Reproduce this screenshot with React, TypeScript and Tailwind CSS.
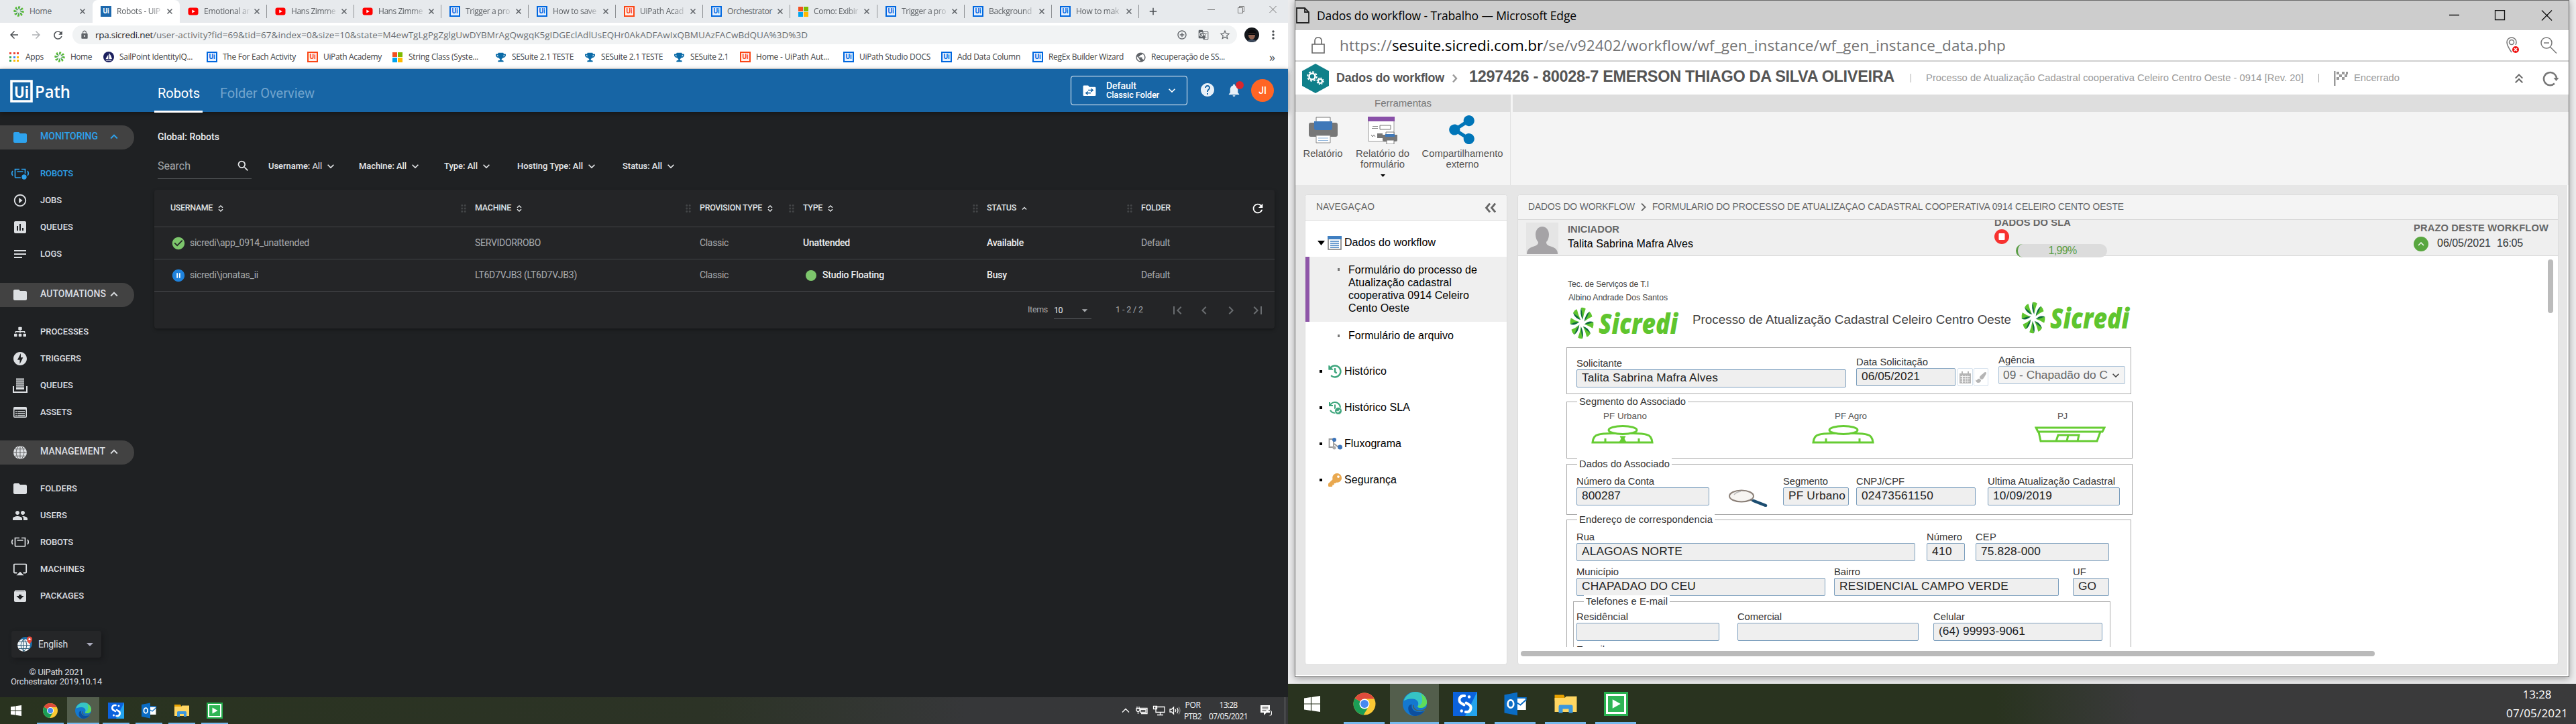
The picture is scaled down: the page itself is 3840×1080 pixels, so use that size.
import { useLayoutEffect, useRef, useState } from "react";
import type { ReactNode } from "react";
import {
  MdFolder, MdPlayCircleOutline, MdInsertChart, MdNotes, MdOfflineBolt, MdPeople, MdAirplay,
  MdArchive, MdSearch, MdRefresh, MdKeyboardArrowUp, MdKeyboardArrowDown, MdFirstPage, MdLastPage,
  MdChevronLeft, MdChevronRight, MdHelp, MdNotifications, MdArrowDropDown, MdCheckCircle, MdPauseCircleFilled,
  MdStarBorder, MdGTranslate, MdMoreVert, MdLock, MdArrowBack, MdArrowForward, MdAddCircleOutline, MdPublic,
  MdDragIndicator, MdAdd, MdKeyboardDoubleArrowUp,
} from "react-icons/md";
import { FaSitemap, FaTrophy, FaShareAlt, FaKey, FaHistory, FaPaintBrush } from "react-icons/fa";

/** Single line of text whose letter spacing is adjusted so that it fills `w` pixels. */
function Fit({ w, className = "", children }: { w: number; className?: string; children: ReactNode }) {
  const ref = useRef<HTMLSpanElement>(null);
  const [ls, setLs] = useState(0);
  useLayoutEffect(() => {
    const el = ref.current;
    if (!el) return;
    const n = (el.textContent || "").length || 1;
    setLs((w - el.getBoundingClientRect().width) / n);
  }, [w]);
  return (
    <span className={`block shrink-0 whitespace-pre ${className}`} style={{ width: w, letterSpacing: ls }}>
      <span ref={ref}>{children}</span>
    </span>
  );
}

/* ---------- small logos ---------- */

function Pinwheel({ className }: { className: string }) {
  const blades = [0, 1, 2, 3, 4, 5, 6, 7];
  return (
    <svg viewBox="0 0 100 100" preserveAspectRatio="none" className={className}>
      {blades.map((i) => (
        <g key={i} transform={`rotate(${i * 45} 50 50)`}>
          <path d="M47 2 Q58 0 66 5 Q58 20 54 38 Z" fill="#5fc52e" />
          <path d="M47 2 Q40 20 54 40 Q54 22 47 2 Z" fill="#0b6b3a" />
        </g>
      ))}
    </svg>
  );
}

function UiBox({ c }: { c: "blue" | "orange" | "solid" }) {
  const tone =
    c === "blue"
      ? "border-2 border-[#0067df] bg-[#e3f0ff] text-[#0067df]"
      : c === "orange"
        ? "border-2 border-[#fa4616] bg-[#fff1ec] text-[#fa4616]"
        : "bg-[#1c68ad] text-white";
  return (
    <span className={`flex h-4 w-4 shrink-0 items-center justify-center font-[Roboto] text-[10px] leading-none font-bold ${tone}`}>
      Ui
    </span>
  );
}

function Microsoft() {
  return (
    <span className="grid h-[15px] w-[15px] shrink-0 grid-cols-2 gap-px">
      <span className="bg-[#f25022]" />
      <span className="bg-[#7fba00]" />
      <span className="bg-[#00a4ef]" />
      <span className="bg-[#ffb900]" />
    </span>
  );
}

function Youtube() {
  return (
    <svg viewBox="0 0 16 16" className="h-4 w-4 shrink-0">
      <rect x="0.5" y="2.5" width="15" height="11" rx="3" fill="#f00" />
      <path d="M6.3 5.4v5.2L10.8 8z" fill="#fff" />
    </svg>
  );
}

function AppsGrid() {
  const c = ["bg-[#ea4335]", "bg-[#ea4335]", "bg-[#ea4335]", "bg-[#34a853]", "bg-[#4285f4]", "bg-[#fbbc05]", "bg-[#34a853]", "bg-[#fbbc05]", "bg-[#fbbc05]"];
  return (
    <span className="grid h-[14px] w-[14px] shrink-0 grid-cols-3 gap-[2.5px]">
      {c.map((k, i) => (
        <span key={i} className={k} />
      ))}
    </span>
  );
}

function SailPoint() {
  return (
    <svg viewBox="0 0 16 16" className="h-4 w-4 shrink-0">
      <circle cx="8" cy="8" r="8" fill="#1b1f5e" />
      <path d="M8.6 2v9H13Q12 6 8.6 2zM7.4 4.500v6.500H3.500Q5 8 7.400 4.500zM3 12.200h10l-1.500 1.200h-7z" fill="#fff" />
    </svg>
  );
}

function Tab({ icon, title, w, active, sep }: { icon: ReactNode; title: string; w: number; active?: boolean; sep?: boolean }) {
  return (
    <div className={`flex h-[34px] w-[130px] shrink-0 items-center pl-3 ${active ? "rounded-t-lg bg-white" : ""}`}>
      {icon}
      <span className={`ml-2 w-[72px] text-[12px] text-[#5b5f63] ${w > 50 && w !== 67 ? "[mask-image:linear-gradient(to_right,black_70%,transparent_98%)]" : ""}`}>
        <Fit w={w}>{title}</Fit>
      </span>
      <svg viewBox="0 0 8 8" className="ml-[3px] h-2 w-2 shrink-0">
        <path d="M0.500 0.500l7 7M7.500 0.500l-7 7" stroke="#5f6368" strokeWidth="1.500" />
      </svg>
      <span className={`ml-auto h-5 w-px ${sep ? "bg-[#8e9194]" : ""}`} />
    </div>
  );
}

const bookmarks: { icon: ReactNode; slot: number; w: number; t: string }[] = [
  { icon: <AppsGrid />, slot: 67, w: 27, t: "Apps" },
  { icon: <Pinwheel className="h-4 w-4" />, slot: 73, w: 32, t: "Home" },
  { icon: <SailPoint />, slot: 154, w: 109, t: "SailPoint IdentityIQ..." },
  { icon: <UiBox c="blue" />, slot: 150, w: 109, t: "The For Each Activity" },
  { icon: <UiBox c="orange" />, slot: 127, w: 87, t: "UiPath Academy" },
  { icon: <Microsoft />, slot: 154, w: 104, t: "String Class (Syste..." },
  { icon: <FaTrophy className="text-[15px] text-[#0b6ba8]" />, slot: 133, w: 92, t: "SESuite 2.1 TESTE" },
  { icon: <FaTrophy className="text-[15px] text-[#0b6ba8]" />, slot: 133, w: 92, t: "SESuite 2.1 TESTE" },
  { icon: <FaTrophy className="text-[15px] text-[#0b6ba8]" />, slot: 98, w: 57, t: "SESuite 2.1" },
  { icon: <UiBox c="orange" />, slot: 154, w: 109, t: "Home - UiPath Aut..." },
  { icon: <UiBox c="blue" />, slot: 146, w: 106, t: "UiPath Studio DOCS" },
  { icon: <UiBox c="blue" />, slot: 136, w: 94, t: "Add Data Column" },
  { icon: <UiBox c="blue" />, slot: 153, w: 112, t: "RegEx Builder Wizard" },
  { icon: <MdPublic className="text-[17px] text-[#5f6368]" />, slot: 200, w: 110, t: "Recuperação de SS..." },
];

function ChromeChrome() {
  return (
    <div className="h-[103px] border-b border-[#d5d7da] bg-white font-['Open_Sans',sans-serif]">
      <div className="flex h-[34px] items-center bg-[#e7eaed] pl-2">
        <Tab icon={<Pinwheel className="h-4 w-4 shrink-0" />} title="Home" w={33} />
        <Tab icon={<UiBox c="solid" />} title="Robots - UiP" w={65} active />
        <Tab icon={<Youtube />} title="Emotional ar" w={68} sep />
        <Tab icon={<Youtube />} title="Hans Zimme" w={66} sep />
        <Tab icon={<Youtube />} title="Hans Zimme" w={66} sep />
        <Tab icon={<UiBox c="blue" />} title="Trigger a pro" w={66} sep />
        <Tab icon={<UiBox c="blue" />} title="How to save" w={65} sep />
        <Tab icon={<UiBox c="orange" />} title="UiPath Acad" w={65} sep />
        <Tab icon={<UiBox c="blue" />} title="Orchestrator" w={67} sep />
        <Tab icon={<Microsoft />} title="Como: Exibir" w={66} sep />
        <Tab icon={<UiBox c="blue" />} title="Trigger a pro" w={66} sep />
        <Tab icon={<UiBox c="blue" />} title="Background" w={64} sep />
        <Tab icon={<UiBox c="blue" />} title="How to mak" w={64} sep />
        <MdAdd className="ml-3 text-[18px] text-[#4b4f53]" />
        <svg viewBox="0 0 104 12" className="mb-[6px] ml-[72px] h-3 w-[104px]" fill="none" stroke="#777">
          <path d="M0 6.500h11M45.500 3.500h7v8h-7zM47.500 3.500v-2h7v8h-2M92.500 1l10 10M102.500 1l-10 10" />
        </svg>
      </div>
      <div className="flex h-9 items-center">
        <MdArrowBack className="ml-3 text-[18px] text-[#4b4f53]" />
        <MdArrowForward className="ml-[15px] text-[18px] text-[#b0b2b5]" />
        <MdRefresh className="ml-[14px] text-[19px] text-[#4b4f53]" />
        <div className="ml-[12px] flex h-7 w-[1736px] items-center rounded-full bg-[#f1f3f4] text-[13.500px]">
          <MdLock className="ml-[11px] text-[14px] text-[#5f6368]" />
          <Fit w={86} className="ml-[9px] text-[#202124]">rpa.sicredi.net</Fit>
          <Fit w={976} className="text-[#6a6e72]">
            /user-activity?fid=69&tid=67&index=0&size=10&state=M4ewTgLgPgZglgUwDYBMrAgQwgqK5gIDGEclAdlUsEQHr0AkADFAwIxQBMUAzFACwBdQUA%3D%3D
          </Fit>
          <MdAddCircleOutline className="ml-auto text-[16px] text-[#5f6368]" />
          <MdGTranslate className="ml-4 text-[16px] text-[#5f6368]" />
          <MdStarBorder className="mr-[9px] ml-[15px] text-[18px] text-[#5f6368]" />
        </div>
        <svg viewBox="0 0 22 22" className="ml-[11px] h-[22px] w-[22px]">
          <circle cx="11" cy="11" r="11" fill="#14171b" />
          <ellipse cx="11" cy="11" rx="5" ry="7" fill="#8f6250" />
          <path d="M5 6q6-5 12 0v2H5zM6 8.500h10v2.500H6z" fill="#0a0a0c" />
          <path d="M4 20q7-5 14 0l-7 2z" fill="#3b4a5f" />
        </svg>
        <MdMoreVert className="ml-[11px] text-[20px] text-[#4b4f53]" />
      </div>
      <div className="flex h-[30px] items-center pl-[14px] text-[12px] text-[#3c4043]">
        {bookmarks.map((b, i) => (
          <div key={i} className="flex h-full shrink-0 items-center" style={{ width: b.slot }}>
            <span className="flex w-6 shrink-0 items-center">{b.icon}</span>
            <Fit w={b.w}>{b.t}</Fit>
          </div>
        ))}
        <span className="text-[18px] leading-none text-[#4b4f53]">»</span>
      </div>
    </div>
  );
}

/* ---------- orchestrator ---------- */

function RobotIcon({ globe }: { globe?: boolean }) {
  return (
    <svg viewBox="0 0 28 20" className="h-5 w-7" fill="none" stroke="currentColor" strokeWidth="1.700">
      <path d="M10 3.500H6.500v11.500a1 1 0 0 0 1 1h13a1 1 0 0 0 1-1V3.500H16M10 3.500h3M9.500 7h9M3 6q-2.500 3.500 0 7M25 6q2.500 3.500 0 7" />
      {globe && <circle cx="20" cy="15" r="4.500" fill="currentColor" stroke="#1f2123" />}
    </svg>
  );
}

function GlobeIcon() {
  return (
    <svg viewBox="0 0 20 20" className="ml-[2px] h-5 w-5">
      <circle cx="10" cy="10" r="10" fill="#dcdfe2" />
      <path d="M0 10h20M2 4.800h16M2 15.200h16M10 0v20M8 0q-8 10 0 20M12 0q8 10 0 20" fill="none" stroke="#424242" strokeWidth="0.700" />
    </svg>
  );
}

function TrayIcon() {
  return (
    <svg viewBox="0 0 22 22" className="h-[22px] w-[22px]" stroke="currentColor" fill="none">
      <path d="M5 1.500h12M5 4.500h12M5 7.500h12M5 10.500h12M5 13.500h12M5 16h12" strokeWidth="2" />
      <path d="M1 12v9h20v-9" strokeWidth="2" />
    </svg>
  );
}

function AssetIcon() {
  return (
    <svg viewBox="0 0 20 16" className="h-4 w-5" fill="none" stroke="currentColor">
      <rect x="0.750" y="0.750" width="18.500" height="14.500" rx="1" strokeWidth="1.500" />
      <path d="M1 2.500h18" strokeWidth="3" />
      <path d="M3 7h2M3 10h2M3 13h2M6 7h11M6 10h11M6 13h11" strokeWidth="1.600" />
    </svg>
  );
}

function Section({ icon, label, w, blue, top }: { icon: ReactNode; label: string; w: number; blue?: boolean; top: string }) {
  return (
    <div className={`flex h-9 w-[200px] items-center rounded-r-full bg-[#424242] text-[14px] font-medium ${blue ? "text-[#2ea3ee]" : "text-[#dcdfe2]"} ${top}`}>
      <span className="flex w-[60px] items-center pl-[18px] text-[24px]">{icon}</span>
      <Fit w={w} className="-mt-[3px]">{label}</Fit>
      <MdKeyboardArrowUp className="mr-[19px] -mt-[2px] ml-auto text-[22px]" />
    </div>
  );
}

function Item({ icon, label, w, blue }: { icon: ReactNode; label: string; w: number; blue?: boolean }) {
  return (
    <div className={`flex h-10 items-center text-[13px] font-medium ${blue ? "text-[#2ea3ee]" : "text-[#dcdfe2]"}`}>
      <span className="flex w-[60px] items-center justify-center text-[22px]">{icon}</span>
      <Fit w={w}>{label}</Fit>
    </div>
  );
}

function Sidebar() {
  return (
    <div className="flex h-[873px] w-[230px] shrink-0 flex-col">
      <Section top="mt-5" icon={<MdFolder />} label="MONITORING" w={86} blue />
      <div className="mt-4">
        <Item icon={<RobotIcon globe />} label="ROBOTS" w={49} blue />
        <Item icon={<MdPlayCircleOutline />} label="JOBS" w={32} />
        <Item icon={<MdInsertChart className="text-[24px]" />} label="QUEUES" w={49} />
        <Item icon={<MdNotes className="text-[24px]" />} label="LOGS" w={32} />
      </div>
      <Section top="mt-[23px]" icon={<MdFolder />} label="AUTOMATIONS" w={98} />
      <div className="mt-[17px]">
        <Item icon={<FaSitemap className="text-[18px]" />} label="PROCESSES" w={72} />
        <Item icon={<MdOfflineBolt className="text-[24px]" />} label="TRIGGERS" w={61} />
        <Item icon={<TrayIcon />} label="QUEUES" w={49} />
        <Item icon={<AssetIcon />} label="ASSETS" w={47} />
      </div>
      <Section top="mt-[22px]" icon={<GlobeIcon />} label="MANAGEMENT" w={97} />
      <div className="mt-4">
        <Item icon={<MdFolder className="text-[24px]" />} label="FOLDERS" w={55} />
        <Item icon={<MdPeople className="text-[24px]" />} label="USERS" w={40} />
        <Item icon={<RobotIcon />} label="ROBOTS" w={49} />
        <Item icon={<MdAirplay />} label="MACHINES" w={66} />
        <Item icon={<MdArchive className="text-[24px]" />} label="PACKAGES" w={65} />
      </div>
      <div className="mt-[32px] ml-[17px] flex h-10 w-[134px] items-center rounded bg-[#252628] text-[14px] text-[#dcdfe2] shadow-[3px_3px_6px_#18191b]">
        <svg viewBox="0 0 24 24" className="ml-2 h-6 w-6">
          <circle cx="13" cy="11" r="10" fill="#1b6ea8" />
          <circle cx="10.500" cy="13.500" r="9.500" fill="#eef3f6" />
          <path d="M1 13.500h19M3 8.500h15M3 18.500h15M10.500 4v19M10.500 4q-9 9.500 0 19M10.500 4q9 9.500 0 19" stroke="#20506e" fill="none" strokeWidth="0.900" />
          <path d="M19 12q-4-5-4-7.500a4 4 0 0 1 8 0Q23 7 19 12z" fill="#e94b3c" />
          <circle cx="19" cy="4.500" r="1.600" fill="#fff" />
        </svg>
        <Fit w={44} className="ml-2">English</Fit>
        <MdArrowDropDown className="ml-auto mr-[5px] text-[24px] text-[#aab]" />
      </div>
      <div className="mt-[15px] ml-4 flex w-[136px] flex-col items-center text-[13px] leading-[14px] text-[#dcdfe2]">
        <Fit w={81}>© UiPath 2021</Fit>
        <Fit w={136}>Orchestrator 2019.10.14</Fit>
      </div>
    </div>
  );
}

function Filter({ k, w, slot, first }: { k: string; w: number; slot: number; first?: boolean }) {
  return (
    <div className={`flex shrink-0 items-center ${first ? "ml-[25px]" : ""}`} style={{ width: slot }}>
      <Fit w={w}>
        {k} <span className={first ? "font-normal" : ""}>All</span>
      </Fit>
      <MdKeyboardArrowDown className="ml-[3px] text-[20px]" />
    </div>
  );
}

function Th({ t, w, sort, last, first }: { t: string; w: number; sort?: "both" | "up"; last?: boolean; first?: boolean }) {
  return (
    <div className={`flex items-center ${first ? "pl-6" : ""}`}>
      <Fit w={w}>{t}</Fit>
      {sort && (
        <svg viewBox="0 0 8 10" className="ml-2 h-[10px] w-2" fill="none" stroke="currentColor" strokeWidth="1.500">
          <path d={sort === "both" ? "M1 3.800L4 1l3 2.800M1 6.200L4 9l3-2.800" : "M1 6.500l3-3 3 3"} />
        </svg>
      )}
      {last ? (
        <MdRefresh className="mr-[14px] ml-auto text-[22px] text-white" />
      ) : (
        <MdDragIndicator className="mr-[8px] ml-auto text-[18px] text-[#434547]" />
      )}
    </div>
  );
}

const cols = "grid grid-cols-[478px_335px_154px_274px_230px_199px] border-b border-[#434548]";

function Orchestrator() {
  return (
    <div className="h-[937px] bg-[#1f2123] font-[Roboto,sans-serif]">
      <div className="relative flex h-16 items-start bg-[#1765a5] shadow-[0_2px_8px_rgba(0,0,0,0.4)]">
        <svg viewBox="0 0 96 34" className="mt-4 ml-[15px] h-[34px] w-[96px]">
          <path d="M2 2h30v30H2z" fill="none" stroke="#fff" strokeWidth="3.600" />
          <text x="6" y="26.500" fontFamily="Open Sans" fontWeight="700" fontSize="24" fill="#fff" textLength="22" lengthAdjust="spacingAndGlyphs">Ui</text>
          <text x="37" y="26.500" fontFamily="Open Sans" fontWeight="600" fontSize="25" fill="#fff" textLength="53" lengthAdjust="spacingAndGlyphs">Path</text>
        </svg>
        <div className="mt-[23px] ml-[119px] flex h-[42px] w-[72px] flex-col border-b-[3px] border-white pl-[5px]">
          <Fit w={63} className="text-[20px] leading-[26px] text-white">Robots</Fit>
        </div>
        <Fit w={141} className="mt-[23px] ml-[26px] text-[20px] leading-[26px] text-[#71a4cd]">Folder Overview</Fit>
        <div className="mt-[10px] ml-auto flex h-11 w-[174px] items-center rounded border border-white text-white">
          <svg viewBox="0 0 20 18" className="ml-[17px] h-[17px] w-5">
            <path d="M0 2a1.500 1.500 0 0 1 1.500-1.500H8l2 2.500h8.500A1.500 1.500 0 0 1 20 4.500v11a1.500 1.500 0 0 1-1.500 1.500h-17A1.500 1.500 0 0 1 0 15.500z" fill="#fff" />
            <path d="M8 8h7M12.500 5.500L15.500 8l-3 2.500M12 12.500H5M7.500 10L4.500 12.500l3 2.500" stroke="#1765a5" strokeWidth="1.500" fill="none" />
          </svg>
          <div className="ml-[15px] flex flex-col text-[13px] leading-[14px] font-medium">
            <Fit w={45} className="text-[14px]">Default</Fit>
            <Fit w={79}>Classic Folder</Fit>
          </div>
          <MdKeyboardArrowDown className="ml-[9px] text-[20px]" />
        </div>
        <MdHelp className="mt-[19px] ml-[18px] text-[24px] text-[#e8f0f7]" />
        <span className="relative mt-[20px] ml-[16px] text-[23px] text-[#e8f0f7]">
          <MdNotifications />
          <span className="absolute -top-[2px] right-[-3px] h-3 w-3 rounded-full bg-[#d9272e]" />
        </span>
        <span className="mt-[15px] mr-[21px] ml-[14px] flex h-[34px] w-[34px] items-center justify-center rounded-full bg-[#ff6524] text-[14px] font-medium text-white">JI</span>
      </div>
      <div className="flex">
        <Sidebar />
        <div className="w-[1670px]">
          <Fit w={92} className="mt-[28px] ml-[5px] text-[14px] leading-[18px] font-medium text-[#eceef0]">Global: Robots</Fit>
          <div className="mt-[16px] flex h-[38px] items-center pl-[5px] text-[13px] font-medium text-[#e6e8ea]">
            <div className="flex h-full w-[140px] items-center border-b border-[#505356] pr-[2px] text-[16px] font-normal text-[#a5a8ab]">
              <Fit w={49}>Search</Fit>
              <MdSearch className="ml-auto text-[21px] text-[#dfe1e3]" />
            </div>
            <Filter k="Username:" w={80} slot={135} first />
            <Filter k="Machine:" w={71} slot={127} />
            <Filter k="Type:" w={50} slot={109} />
            <Filter k="Hosting Type:" w={98} slot={157} />
            <Filter k="Status:" w={59} slot={90} />
          </div>
          <div className="mt-[16px] flex h-[207px] flex-col rounded bg-[#242527] text-[14px] text-[#a9acb0] shadow-[0_2px_5px_rgba(0,0,0,0.35)]">
            <div className={`${cols} h-14 text-[12.500px] font-medium text-[#dfe1e3]`}>
              <Th t="USERNAME" w={63} sort="both" first />
              <Th t="MACHINE" w={54} sort="both" />
              <Th t="PROVISION TYPE" w={93} sort="both" />
              <Th t="TYPE" w={29} sort="both" />
              <Th t="STATUS" w={44} sort="up" />
              <Th t="FOLDER" w={44} last />
            </div>
            <div className={`${cols} h-12 items-center`}>
              <div className="flex items-center pl-[25px]">
                <MdCheckCircle className="text-[22px] text-[#7dc66c]" />
                <Fit w={178} className="ml-[6px]">sicredi\app_0914_unattended</Fit>
              </div>
              <Fit w={98}>SERVIDORROBO</Fit>
              <Fit w={43}>Classic</Fit>
              <Fit w={70} className="font-medium text-[#eceef0]">Unattended</Fit>
              <Fit w={55} className="font-medium text-[#eceef0]">Available</Fit>
              <Fit w={43}>Default</Fit>
            </div>
            <div className={`${cols} h-12 items-center`}>
              <div className="flex items-center pl-[25px]">
                <span className="flex w-[22px] justify-center">
                  <span className="flex h-[14px] w-[14px] rounded-full bg-white text-[#1f82dc]">
                    <MdPauseCircleFilled className="-m-1 h-[22px] w-[22px] shrink-0" />
                  </span>
                </span>
                <Fit w={102} className="ml-[6px]">sicredi\jonatas_ii</Fit>
              </div>
              <Fit w={152}>LT6D7VJB3 (LT6D7VJB3)</Fit>
              <Fit w={43}>Classic</Fit>
              <div className="flex items-center font-medium text-[#eceef0]">
                <span className="mr-[9px] ml-[4px] h-4 w-4 rounded-full bg-[#7dc66c]" />
                <Fit w={92}>Studio Floating</Fit>
              </div>
              <Fit w={30} className="font-medium text-[#eceef0]">Busy</Fit>
              <Fit w={43}>Default</Fit>
            </div>
            <div className="flex flex-1 items-center justify-end text-[12.500px]">
              <Fit w={30}>Items</Fit>
              <div className="mt-[2px] ml-[9px] flex h-6 w-[56px] items-center border-b border-[#55585b] text-[#e6e8ea]">
                <Fit w={13}>10</Fit>
                <MdArrowDropDown className="ml-auto text-[20px] text-[#aaadb0]" />
              </div>
              <Fit w={41} className="ml-[36px]">1 - 2 / 2</Fit>
              <div className="mr-[13px] ml-[39px] flex gap-4 text-[24px] text-[#6a6d70]">
                <MdFirstPage />
                <MdChevronLeft />
                <MdChevronRight />
                <MdLastPage />
              </div>
            </div>
          </div>
        </div>
      </div>
    </div>
  );
}

/* ---------- taskbar ---------- */

function WinLogo({ className }: { className: string }) {
  return (
    <svg viewBox="0 0 16 16" className={className} fill="#fff">
      <path d="M0 2.300L6.600 1.400v6.200H0zM7.400 1.300L16 0v7.600H7.400zM0 8.400h6.600v6.200L0 13.700zM7.400 8.400H16V16l-8.600-1.300z" />
    </svg>
  );
}

const ChromeIcon = () => (
  <svg viewBox="0 0 48 48" className="h-full w-full">
    <circle cx="24" cy="24" r="22" fill="#fbc934" />
    <path d="M24 24L5 13A22 22 0 0 0 22 46l8-13z" fill="#1b9d56" />
    <path d="M24 24L5 13A22 22 0 0 1 43.500 14H24z" fill="#de4b3c" />
    <circle cx="24" cy="24" r="10" fill="#fff" />
    <circle cx="24" cy="24" r="8" fill="#4688f0" />
  </svg>
);

const EdgeIcon = () => (
  <svg viewBox="0 0 48 48" className="h-full w-full">
    <circle cx="24" cy="24" r="24" fill="#1478cf" />
    <path d="M2 18C6 6 16 0 25 0c14 0 23 10 23 20 0 7-5 12-12 12-5 0-7-2-6-4 4-9-4-15-12-14C10 14 5 16 2 18z" fill="#36c4c5" />
    <path d="M36 4c8 4 12 11 12 17 0 7-6 11-12 11-5 0-7-2-6-4 8 0 12-12 6-24z" fill="#5fdc5a" />
    <path d="M18 25c-2 11 8 19 25 13-5 7-12 10-19 10-8 0-13-8-13-15 0-5 3-8 7-8z" fill="#0d4f9e" />
    <path d="M22 26c-1 8 8 14 20 9l5-4-1 5c-15 6-27 0-26-9z" fill="#535e4c" />
  </svg>
);

const SIcon = () => (
  <svg viewBox="0 0 24 24" className="h-full w-full">
    <path d="M0 0h24v24H0z" fill="#0b62dd" />
    <path d="M24 0v24H12z" fill="#23a3ee" />
    <path d="M11.500 4H9.500a4 4 0 0 0-1 7.500l2.500 1.500M12.500 20h2a4 4 0 0 0 1-7.500L13 11" fill="none" stroke="#fff" strokeWidth="2.600" strokeLinecap="round" />
    <circle cx="16" cy="5" r="1.500" fill="#fff" />
    <circle cx="8.500" cy="19" r="1.500" fill="#fff" />
  </svg>
);

const OutlookIcon = () => (
  <svg viewBox="0 0 24 24" className="h-full w-full">
    <path d="M12 6h10.500v12H12z" fill="#fff" />
    <path d="M12 6h10.500v2L17 13l-5-3" fill="none" stroke="#0a6cc4" strokeWidth="1.300" />
    <path d="M1 3l13-2.500v23L1 21z" fill="#0a6cc4" />
    <ellipse cx="7.300" cy="12" rx="2.900" ry="3.800" fill="none" stroke="#fff" strokeWidth="1.800" />
  </svg>
);

const ExplorerIcon = () => (
  <svg viewBox="0 0 24 24" className="h-full w-full">
    <path d="M1 3h9l1 2v4H1z" fill="#e5a000" />
    <path d="M1 6h10l1.500-1.500H23V20H1z" fill="#ffd662" />
    <path d="M5 20v-5.500q0-1.500 1.500-1.500h11q1.500 0 1.500 1.500V21h-4v-4H9v4H5z" fill="#3b97dd" />
  </svg>
);

const PlayIcon = () => (
  <svg viewBox="0 0 24 24" className="h-full w-full">
    <path d="M0 0h24v24H0z" fill="#28b14f" />
    <path d="M3 3h18v18H3z" fill="#2fb555" stroke="#fff" strokeWidth="2" />
    <path d="M8.500 7.500v9l8-4.500z" fill="#fff" />
  </svg>
);

const apps = [ChromeIcon, EdgeIcon, SIcon, OutlookIcon, ExplorerIcon, PlayIcon];

function TaskbarSmall() {
  return (
    <div className="flex h-10 items-stretch bg-linear-to-r from-[#29331f] via-[#2c3326] via-55% to-[#363739] to-75% font-['Open_Sans',sans-serif] text-white">
      <span className="flex w-12 items-center justify-center"><WinLogo className="h-4 w-4" /></span>
      {apps.map((Icon, i) => (
        <span key={i} className={`flex flex-col items-center justify-between pt-2 ${i === 0 ? "ml-[7px] w-10" : i === 1 ? "ml-[5px] w-12 bg-[#535e4c]" : i === 2 ? "ml-[5px] w-10" : "ml-[9px] w-10"}`}>
          <span className="h-6 w-6"><Icon /></span>
          <span className="h-[2px] w-full bg-[#76b9ed]" />
        </span>
      ))}
      <div className="ml-auto flex items-center text-[12px] leading-[17px]">
        <svg viewBox="0 0 90 16" className="h-4 w-[90px]" fill="none" stroke="#fff" strokeWidth="1.300">
          <path d="M2 10.500L7 5.500l5 5" />
          <path d="M27 4.500h12v8H30M29 6.500h8v4h-8zM24 2v3M27 2v3M23 5h5v3q-2.500 3-5 0zM25.500 9v4" />
          <path d="M52 2.500h13v8H52zM48.500 1.500h5v4h-5zM58.500 11v3M54 14.500h9" />
          <path d="M73 6h2.500l3-3v10l-3-3H73zM81 6q1.500 2 0 4M83.500 4q3 4 0 8" />
          <path d="M86 2.500q4 5.500 0 11" stroke="#888" />
        </svg>
        <div className="ml-[4px] flex w-[26px] flex-col items-center">
          <Fit w={23}>POR</Fit>
          <Fit w={26}>PTB2</Fit>
        </div>
        <div className="ml-[11px] flex flex-col items-center">
          <Fit w={27}>13:28</Fit>
          <Fit w={58}>07/05/2021</Fit>
        </div>
        <svg viewBox="0 0 18 18" className="mr-[19px] ml-[18px] h-[18px] w-[18px]">
          <path d="M1 1h14v11h-5l-4 4v-4H1z" fill="#fff" />
          <path d="M3.500 4h9M3.500 6.500h9M3.500 9h6" stroke="#333" />
          <path d="M12 16.500a4.500 4.500 0 1 0 1-8 3.500 3.500 0 0 1-1 8z" fill="#fff" stroke="#333" strokeWidth="0.800" />
        </svg>
        <span className="mr-1 h-10 w-px bg-[#77787a]" />
      </div>
    </div>
  );
}

function TaskbarLarge() {
  return (
    <div className="flex h-[60px] items-stretch bg-linear-to-r from-[#29331f] from-55% to-[#3a3a3b] to-66% font-['Open_Sans',sans-serif] text-white">
      <span className="flex w-[72px] items-center justify-center"><WinLogo className="h-6 w-6" /></span>
      {apps.map((Icon, i) => (
        <span key={i} className={`flex flex-col items-center justify-between pt-3 ${i === 0 ? "ml-[11px] w-[61px]" : i === 1 ? "ml-[8px] w-[73px] bg-[#535e4c]" : i === 2 ? "ml-[8px] w-[61px]" : "ml-[14px] w-[61px]"}`}>
          <span className="h-9 w-9"><Icon /></span>
          <span className="h-[3px] w-full bg-[#76b9ed]" />
        </span>
      ))}
      <div className="mr-[12px] ml-auto flex flex-col items-center pt-[2px] text-[17px] leading-[28px]">
        <Fit w={43}>13:28</Fit>
        <Fit w={92}>07/05/2021</Fit>
      </div>
    </div>
  );
}

/* ---------- workflow window ---------- */

function SicrediLogo({ className }: { className: string }) {
  return (
    <div className={`flex h-12 w-[166px] shrink-0 ${className}`}>
      <Pinwheel className="h-12 w-[39px]" />
      <svg viewBox="0 0 124 48" className="ml-[6px] h-12 w-[124px] shrink-0">
        <text x="1" y="40" fontFamily="Open Sans" fontStyle="italic" fontWeight="800" fontSize="43" fill="#5fc52e" textLength="118" lengthAdjust="spacingAndGlyphs">Sicredi</text>
      </svg>
    </div>
  );
}

function Field({ label, lw, w, value, vw, ml = "", children }: { label: string; lw: number; w: number; value?: string; vw?: number; ml?: string; children?: ReactNode }) {
  return (
    <div className={`shrink-0 ${ml}`}>
      <Fit w={lw} className="h-[17px] text-[14.800px] leading-[17px] text-[#333]">{label}</Fit>
      <div className="flex">
        <div className="flex h-[27px] items-center rounded-[2px] border border-[#7b9ebd] bg-[#efefef] pl-[7px] text-[17.300px] leading-none text-[#222]" style={{ width: w }}>
          {value && vw && <Fit w={vw} className="-mt-px">{value}</Fit>}
        </div>
        {children}
      </div>
    </div>
  );
}

function Legend({ w, left, children }: { w: number; left: string; children: string }) {
  return (
    <span className={`absolute -top-[10px] bg-white px-[3px] text-[14.700px] leading-[18px] text-[#333] ${left}`}>
      <Fit w={w}>{children}</Fit>
    </span>
  );
}

function Person({ tie }: { tie?: boolean }) {
  return (
    <svg viewBox="0 0 94 28" className="h-7 w-[94px]" fill="none" stroke="#66cc33" strokeWidth="3">
      <path d="M3 26q1-10 8-11.500Q17 12.500 32 12.500h32q14 0 20 2Q91 16 92 26zM22 26v-6M72 26v-6" />
      <ellipse cx="48" cy="7.500" rx="21" ry="6" fill="#fff" />
      {tie && <path d="M44 17h8l-2 3 3 6H43l3-6z" fill="#66cc33" strokeWidth="1" />}
    </svg>
  );
}

function Form() {
  return (
    <div className="h-[583px] overflow-hidden pt-[33px] pl-[72px]">
      <Fit w={121} className="ml-[2px] h-[18px] text-[12.200px] leading-[18px] text-[#444]">Tec. de Serviços de T.I</Fit>
      <Fit w={148} className="mt-[2px] ml-[3px] h-[18px] text-[12.200px] leading-[18px] text-[#444]">Albino Andrade Dos Santos</Fit>
      <div className="flex h-[65px] items-start">
        <SicrediLogo className="mt-[5px] ml-[5px]" />
        <Fit w={475} className="mt-[12px] ml-[17px] text-[18.800px] leading-[24px] text-[#444]">Processo de Atualização Cadastral Celeiro Centro Oeste</Fit>
        <SicrediLogo className="-mt-[3px] ml-[15px]" />
      </div>

      <div className="flex h-[70px] w-[842px] items-start border border-[#aaa] pl-[14px]">
        <Field ml="mt-[15px]" label="Solicitante" lw={68} w={402} value="Talita Sabrina Mafra Alves" vw={203} />
        <Field ml="ml-[15px] mt-[13px]" label="Data Solicitação" lw={107} w={148} value="06/05/2021" vw={87}>
          <span className="ml-[3px] flex h-[27px] w-[23px] items-center justify-center rounded-[2px] border border-[#d3e0ec]">
            <svg viewBox="0 0 17 18" className="h-[18px] w-[17px]" fill="none" stroke="#b5b5b5">
              <path d="M0 3h17v15H0z" fill="#b5b5b5" stroke="none" />
              <path d="M1.500 7.500h14M1.500 11h14M1.500 14.500h14M4.500 6v11M8.500 6v11M12.500 6v11" stroke="#f4f4f4" />
              <path d="M4 0v4M13 0v4" strokeWidth="2" />
            </svg>
          </span>
          <span className="ml-px flex h-[27px] w-[22px] items-center justify-center rounded-[2px] border border-[#d3e0ec] text-[16px] text-[#b5b5b5]"><FaPaintBrush /></span>
        </Field>
        <div className="mt-[10px] ml-[15px]">
          <Fit w={54} className="h-[17px] text-[14.800px] leading-[17px] text-[#333]">Agência</Fit>
          <div className="flex h-[27px] w-[189px] items-center rounded-[2px] border border-[#a9c1d8] bg-[#f4f4f4] pl-[6px] text-[17.300px] text-[#666]">
            <Fit w={156}>09 - Chapadão do C</Fit>
            <MdKeyboardArrowDown className="ml-[2px] text-[20px] text-[#444]" />
          </div>
        </div>
      </div>

      <div className="relative mt-[11px] flex h-[85px] w-[844px] border border-[#aaa] pt-[12px] text-[13.400px] leading-[18px] text-[#555]">
        <Legend left="left-[15px]" w={159}>Segmento do Associado</Legend>
        <div className="ml-[35px] flex w-[94px] flex-col">
          <Fit w={65} className="ml-[19px]">PF Urbano</Fit>
          <span className="mt-[4px]"><Person tie /></span>
        </div>
        <div className="ml-[235px] flex w-[94px] flex-col">
          <Fit w={48} className="ml-[35px]">PF Agro</Fit>
          <span className="mt-[4px]"><Person /></span>
        </div>
        <div className="ml-[239px] flex w-[106px] flex-col">
          <Fit w={15} className="ml-[34px]">PJ</Fit>
          <svg viewBox="0 0 106 26" className="mt-[5px] h-[26px] w-[106px]" fill="none" stroke="#66cc33" strokeWidth="3">
            <path d="M2 3h102l-3 6H5zM6 9l3 14h84l5-14M32 23l3-9h31l-2 9M50 14l-2 9" />
          </svg>
        </div>
      </div>

      <div className="relative mt-[8px] flex h-[76px] w-[844px] border border-[#aaa] pt-[17px] pl-[14px]">
        <Legend left="left-[15px]" w={135}>Dados do Associado</Legend>
        <Field label="Número da Conta" lw={116} w={198} value="800287" vw={58} />
        <svg viewBox="0 0 60 26" className="mt-[20px] ml-[28px] h-[26px] w-[60px]">
          <ellipse cx="20" cy="10" rx="18" ry="8.500" fill="#f7f5f2" stroke="#8b8078" strokeWidth="2" />
          <path d="M9 8q3-4 10-5" stroke="#bbb" strokeWidth="1.500" fill="none" />
          <path d="M33 15l4 2" stroke="#777" strokeWidth="3" />
          <path d="M38 17l18 7" stroke="#1c4d70" strokeWidth="4.500" strokeLinecap="round" />
        </svg>
        <Field ml="ml-[22px]" label="Segmento" lw={67} w={98} value="PF Urbano" vw={85} />
        <Field ml="ml-[11px]" label="CNPJ/CPF" lw={72} w={178} value="02473561150" vw={107} />
        <Field ml="ml-[18px]" label="Ultima Atualização Cadastral" lw={190} w={197} value="10/09/2019" vw={88} />
      </div>

      <div className="relative mt-[7px] h-[220px] w-[842px] border border-[#aaa] pt-[17px] pl-[9px]">
        <Legend left="left-[15px]" w={199}>Endereço de correspondencia</Legend>
        <div className="flex pl-[5px]">
          <Field label="Rua" lw={27} w={505} value="ALAGOAS NORTE" vw={150} />
          <Field ml="ml-[17px]" label="Número" lw={53} w={57} value="410" vw={30} />
          <Field ml="ml-[16px]" label="CEP" lw={31} w={199} value="75.828-000" vw={89} />
        </div>
        <div className="mt-[8px] flex pl-[5px]">
          <Field label="Município" lw={63} w={371} value="CHAPADAO DO CEU" vw={170} />
          <Field ml="ml-[13px]" label="Bairro" lw={39} w={335} value="RESIDENCIAL CAMPO VERDE" vw={252} />
          <Field ml="ml-[21px]" label="UF" lw={20} w={54} value="GO" vw={27} />
        </div>
        <div className="relative mt-[8px] h-[100px] w-[801px] border border-[#aaa] pt-[14px] pl-[4px]">
          <Legend left="left-[15px]" w={122}>Telefones e E-mail</Legend>
          <div className="flex">
            <Field label="Residêncial" lw={77} w={213} />
            <Field ml="ml-[27px]" label="Comercial" lw={66} w={270} />
            <Field ml="ml-[22px]" label="Celular" lw={47} w={252} value="(64) 99993-9061" vw={129} />
          </div>
          <Fit w={42} className="mt-[5px] text-[14.800px] leading-[17px] text-[#333]">E-mail</Fit>
        </div>
      </div>
    </div>
  );
}

function NavItem({ icon, label, w }: { icon: ReactNode; label: string; w: number }) {
  return (
    <div className="flex h-[54px] items-center">
      <span className="ml-[21px] h-1 w-1 bg-black" />
      <span className="ml-[9px] flex w-6 items-center">{icon}</span>
      <Fit w={w}>{label}</Fit>
    </div>
  );
}

function NavPanel() {
  return (
    <div className="flex h-[702px] w-[302px] flex-col overflow-hidden rounded border border-[#dcdcdc] bg-white text-[16px] text-black">
      <div className="flex h-[38px] items-center border-b border-[#dadada] bg-[#f4f4f4] text-[13.800px] text-[#666]">
        <Fit w={87} className="ml-4">NAVEGAÇAO</Fit>
        <svg viewBox="0 0 18 14" className="mr-[15px] ml-auto h-[14px] w-[18px]" fill="none" stroke="#666" strokeWidth="2.800">
          <path d="M8 0.500L2.500 7 8 13.500M16 0.500L10.500 7l5.500 6.500" />
        </svg>
      </div>
      <div className="mt-[12px] flex h-[42px] items-center">
        <svg viewBox="0 0 11 7" className="mr-[4px] ml-[18px] h-[7px] w-[11px]"><path d="M0 0h11L5.500 7z" /></svg>
        <svg viewBox="0 0 21 21" className="h-[21px] w-[21px]">
          <path d="M1 1h19v19H1z" fill="#fff" stroke="#777" strokeWidth="1.500" />
          <path d="M0 0h21v5H0z" fill="#3f7fc1" />
          <path d="M4 8h13M4 11h13M4 14h13M4 17h13" stroke="#3f7fc1" strokeWidth="1.300" />
        </svg>
        <Fit w={136} className="ml-[4px]">Dados do workflow</Fit>
      </div>
      <div className="flex h-[97px] border-l-[6px] border-[#8e55a8] bg-[#efefef] pt-[10px] leading-[19px]">
        <span className="mt-[7px] mr-[13px] ml-[42px] h-1 w-[3px] bg-[#777]" />
        <div>
          <Fit w={192}>Formulário do processo de</Fit>
          <Fit w={154}>Atualização cadastral</Fit>
          <Fit w={180}>cooperativa 0914 Celeiro</Fit>
          <Fit w={91}>Cento Oeste</Fit>
        </div>
      </div>
      <div className="flex h-[41px] items-center">
        <span className="mr-[13px] ml-[48px] h-1 w-[3px] bg-[#777]" />
        <Fit w={157}>Formulário de arquivo</Fit>
      </div>
      <div className="mt-[6px]">
        <NavItem icon={<FaHistory className="text-[20px] text-[#3da57c]" />} label="Histórico" w={63} />
        <NavItem
          icon={
            <svg viewBox="0 0 21 21" className="h-[21px] w-[21px]" fill="none" stroke="#3da57c" strokeWidth="2">
              <path d="M2 2v5h5M3 6a8 8 0 1 1 0 8M10 5.500V11l3 2" />
              <circle cx="15" cy="15" r="5.500" fill="#3da57c" stroke="#fff" strokeWidth="1" />
              <path d="M12.500 15l2 2 3-3.500" stroke="#fff" strokeWidth="1.500" />
            </svg>
          }
          label="Histórico SLA"
          w={98}
        />
        <NavItem
          icon={
            <svg viewBox="0 0 21 18" className="h-[18px] w-[21px]" fill="none">
              <path d="M8 2H1.500v12H8V4M9 9l6 5" stroke="#999" strokeWidth="1.800" />
              <circle cx="9" cy="3" r="3" fill="#3b73b9" />
              <circle cx="9" cy="15" r="2.500" fill="#aaa" />
              <circle cx="17.500" cy="14" r="3.500" fill="#3b73b9" />
            </svg>
          }
          label="Fluxograma"
          w={85}
        />
        <NavItem icon={<FaKey className="text-[20px] text-[#e9a84f]" />} label="Segurança" w={78} />
      </div>
    </div>
  );
}

function MainPanel() {
  return (
    <div className="relative flex h-[702px] w-[1552px] flex-col overflow-hidden rounded border border-[#dcdcdc] bg-white">
      <div className="flex h-[37px] shrink-0 items-center border-b border-[#d8d8d8] bg-[#f4f4f4] text-[13.800px] text-[#666]">
        <Fit w={159} className="ml-[15px]">DADOS DO WORKFLOW</Fit>
        <svg viewBox="0 0 8 12" className="ml-[9px] h-3 w-2" fill="none" stroke="#666" strokeWidth="1.800"><path d="M1 0.500L6.500 6 1 11.500" /></svg>
        <Fit w={703} className="ml-[9px]">FORMULARIO DO PROCESSO DE ATUALIZAÇAO CADASTRAL COOPERATIVA 0914 CELEIRO CENTO OESTE</Fit>
      </div>
      <div className="flex h-[54px] shrink-0 items-start border-b border-[#d8d8d8] bg-[#efefef] text-[16px] leading-[18px] text-black">
        <svg viewBox="0 0 48 47" className="mt-[4px] ml-[12px] h-[47px] w-12">
          <path d="M0 0h48v47H0z" fill="#e5e5e5" />
          <path d="M24 6c6 0 10 5 10 12 0 5-2 9-4 11 0 4 2 5 8 7 6 2 9 5 9 11H1c0-6 3-9 9-11 6-2 8-3 8-7-2-2-4-6-4-11 0-7 4-12 10-12z" fill="#a5a3a6" />
        </svg>
        <div className="mt-[5px] ml-[14px]">
          <Fit w={77} className="text-[14.700px] font-bold text-[#666]">INICIADOR</Fit>
          <Fit w={187} className="mt-[4px]">Talita Sabrina Mafra Alves</Fit>
        </div>
        <div className="relative ml-[449px] h-[60px] w-[168px]">
          <div className="h-[14px] overflow-hidden">
            <Fit w={114} className="-mt-[5px] text-[14.700px] font-bold text-[#666]">DADOS DO SLA</Fit>
          </div>
          <svg viewBox="0 0 22 22" className="h-[22px] w-[22px]">
            <circle cx="11" cy="11" r="11" fill="#f7312f" />
            <rect x="6.500" y="6" width="9" height="10" rx="1" fill="#fff" />
          </svg>
          <div className="ml-8 flex h-5 w-[136px] items-center justify-center overflow-hidden rounded-full border-l-[3px] border-[#5a9e45] bg-[#dcdcdc] text-[#5a9e45]">
            <Fit w={42}>1,99%</Fit>
          </div>
        </div>
        <div className="mt-[3px] mr-[14px] ml-auto">
          <Fit w={201} className="text-[14.700px] font-bold text-[#666]">PRAZO DESTE WORKFLOW</Fit>
          <div className="mt-[4px] flex items-center text-[#333]">
            <span className="flex h-[22px] w-[22px] items-center justify-center rounded-full bg-[#58a63f] text-white"><MdKeyboardArrowUp className="text-[18px]" /></span>
            <Fit w={80} className="-mt-[3px] ml-[13px]">06/05/2021</Fit>
            <Fit w={39} className="-mt-[3px] ml-[9px]">16:05</Fit>
          </div>
        </div>
      </div>
      <div className="flex">
        <div className="w-[1535px]"><Form /></div>
        <div className="mt-[5px] h-20 w-2 rounded-full bg-[#bbb]" />
      </div>
      <div className="mt-[6px] ml-[4px] h-2 w-[1273px] shrink-0 rounded-full bg-[#bababa]" />
    </div>
  );
}

function Workflow() {
  return (
    <div className="flex h-[1010px] w-[1900px] flex-col border border-[#6b6b6b] bg-white font-['Liberation_Sans',Arial,sans-serif] shadow-[0_2px_10px_rgba(0,0,0,0.35)]">
      <div className="flex h-11 shrink-0 items-center bg-[#cdcdcd] font-['Open_Sans',sans-serif] text-[17.500px] text-black">
        <svg viewBox="0 0 20 24" className="ml-px h-6 w-5" fill="none" stroke="#222" strokeWidth="1.800"><path d="M1 1h12l6 6v16H1zM13 1v6h6" /></svg>
        <Fit w={387} className="ml-[11px]">Dados do workflow - Trabalho — Microsoft Edge</Fit>
        <svg viewBox="0 0 154 16" className="mr-[24px] ml-auto h-4 w-[154px]" fill="none" stroke="#111" strokeWidth="1.300">
          <path d="M0 7.500h15M68.500 0.500h14v14h-14zM138 0.500l15 15M153 0.500l-15 15" />
        </svg>
      </div>
      <div className="flex h-[47px] shrink-0 items-center border-b-2 border-[#cfcfcf] bg-white font-['Open_Sans',sans-serif] text-[22.500px] text-[#737373]">
        <svg viewBox="0 0 20 25" className="ml-6 h-[25px] w-5" fill="none" stroke="#666" strokeWidth="1.600"><path d="M1 11h18v13H1zM5 11V6q0-5 5-5t5 5v5" /></svg>
        <Fit w={78} className="ml-[22px]">https://</Fit>
        <Fit w={225} className="text-black">sesuite.sicredi.com.br</Fit>
        <Fit w={690}>/se/v92402/workflow/wf_gen_instance/wf_gen_instance_data.php</Fit>
        <svg viewBox="0 0 78 26" className="mr-4 ml-auto h-[26px] w-[78px]" fill="none" stroke="#777" strokeWidth="1.500">
          <path d="M9 23Q2 13 2 8a7 7 0 0 1 14 0q0 2-1 4" />
          <circle cx="9" cy="8" r="3.500" />
          <circle cx="15" cy="19" r="5" fill="#f01010" stroke="none" />
          <path d="M13 17l4 4M17 17l-4 4" stroke="#fff" />
          <circle cx="61" cy="9" r="8" />
          <path d="M57 9h8M66.500 15L76 24.500" />
        </svg>
      </div>
      <div className="flex h-[49px] shrink-0 items-center bg-white">
        <svg viewBox="0 0 40 44" className="ml-[10px] h-11 w-10">
          <path d="M20 0l20 11v22L20 44 0 33V11z" fill="#10808a" />
          <g fill="none" stroke="#fff">
            <circle cx="15" cy="19" r="4.500" strokeWidth="2.600" />
            <circle cx="15" cy="19" r="6.800" strokeWidth="2" strokeDasharray="3 2.340" />
            <circle cx="27" cy="26" r="3" strokeWidth="2.200" />
            <circle cx="27" cy="26" r="4.800" strokeWidth="1.600" strokeDasharray="2 1.770" />
          </g>
        </svg>
        <Fit w={161} className="ml-[11px] text-[17.800px] font-bold text-[#555]">Dados do workflow</Fit>
        <svg viewBox="0 0 8 12" className="ml-[12px] h-3 w-2" fill="none" stroke="#999" strokeWidth="2.400"><path d="M1 0.500L6 6 1 11.500" /></svg>
        <Fit w={634} className="-mt-[3px] ml-[17px] text-[23.500px] font-bold text-[#555]">1297426 - 80028-7 EMERSON THIAGO DA SILVA OLIVEIRA</Fit>
        <span className="ml-[24px] h-[13px] w-px bg-[#aaa]" />
        <Fit w={563} className="ml-[22px] text-[14.800px] text-[#999]">Processo de Atualização Cadastral cooperativa Celeiro Centro Oeste - 0914 [Rev. 20]</Fit>
        <span className="ml-[22px] h-[13px] w-px bg-[#aaa]" />
        <svg viewBox="0 0 22 22" className="ml-[22px] h-[22px] w-[22px]" fill="#999">
          <path d="M0 0h2.500v22H0zM4 1h4v4H4zM12 1h4v4h-4zM8 5h4v4H8zM16 5h4v4h-4zM4 9h4v4H4zM12 9h4v4h-4zM18 1h3v4h-3z" />
        </svg>
        <Fit w={68} className="ml-[8px] text-[14.800px] text-[#999]">Encerrado</Fit>
        <MdKeyboardDoubleArrowUp className="ml-auto text-[24px] text-[#666]" />
        <svg viewBox="0 0 26 24" className="mr-[14px] ml-[22px] h-6 w-[26px]" fill="none" stroke="#777" strokeWidth="2.600">
          <path d="M19 19.500A9.500 9.500 0 1 1 22 12" />
          <path d="M17.500 11h8L21.500 16z" fill="#777" stroke="none" />
        </svg>
      </div>
      <div className="flex h-[26px] shrink-0 bg-[#dedede] text-[15px] text-[#777]">
        <div className="flex w-[321px] items-center justify-center"><Fit w={85}>Ferramentas</Fit></div>
        <span className="w-[3px] bg-[#f5f5f5]" />
      </div>
      <div className="flex h-[109px] shrink-0 items-start bg-[#f4f4f4] text-[14.800px] leading-4 text-[#555]">
        <div className="flex h-full w-[321px] border-r border-[#e2e2e2]">
          <div className="ml-[11px] flex w-[60px] flex-col items-center pt-[7px]">
            <svg viewBox="0 0 43 40" className="h-10 w-[43px]">
              <path d="M11 1h21v9H11z" fill="#fff" stroke="#777" />
              <path d="M0 12q0-3 3-3h5v3h27V9h5q3 0 3 3v15q0 3-3 3H3q-3 0-3-3z" fill="#777" />
              <path d="M8 7h27v10q0 3-3 3H11q-3 0-3-3z" fill="#3f78b8" />
              <path d="M11 28h21v11H11z" fill="#fff" stroke="#888" />
              <path d="M14 32h15M14 35.500h15" stroke="#8fb5dc" />
            </svg>
            <Fit w={59} className="mt-[7px]">Relatório</Fit>
          </div>
          <div className="ml-[19px] flex w-[80px] flex-col items-center pt-[7px]">
            <svg viewBox="0 0 45 41" className="h-[41px] w-[45px]">
              <path d="M1 1h38v36H1z" fill="#fff" stroke="#999" />
              <path d="M0 0h40v7H0z" fill="#8950a8" />
              <path d="M7 14.500h8M6 17.500h9" stroke="#888" />
              <path d="M18 13h16v6H18zM5 27l2 3 2-3 2 3" stroke="#777" fill="none" />
              <path d="M14 25h8v7h-8zM22 27h22v8q0 2-2 2H24q-2 0-2-2z" fill="#777" />
              <path d="M27 23h12v5H27zM28 35h11v6H28z" fill="#fff" stroke="#777" />
              <path d="M26 26h14v4H26z" fill="#3f78b8" />
            </svg>
            <Fit w={80} className="mt-[6px]">Relatório do</Fit>
            <Fit w={66}>formulário</Fit>
            <svg viewBox="0 0 7 4" className="mt-[7px] h-1 w-[7px]"><path d="M0 0h7L3.500 4z" /></svg>
          </div>
          <div className="ml-[18px] flex w-[122px] flex-col items-center pt-[5px]">
            <FaShareAlt className="mr-[3px] h-[43px] w-[40px] text-[#0075b8]" />
            <Fit w={121} className="mt-[6px]">Compartilhamento</Fit>
            <Fit w={49}>externo</Fit>
          </div>
        </div>
      </div>
      <div className="mr-[2px] mb-[2px] flex flex-1 items-start gap-[15px] bg-[#e6e6e6] pt-[14px] pl-[14px]">
        <NavPanel />
        <MainPanel />
      </div>
    </div>
  );
}

export default function App() {
  return (
    <div className="flex h-[1080px] w-[3840px] overflow-hidden">
      <div className="w-[1920px] shrink-0">
        <ChromeChrome />
        <Orchestrator />
        <TaskbarSmall />
      </div>
      <div className="w-[1920px] shrink-0">
        <div className="h-[1020px] overflow-hidden bg-[#ededee] pl-[10px]">
          <Workflow />
        </div>
        <TaskbarLarge />
      </div>
    </div>
  );
}
